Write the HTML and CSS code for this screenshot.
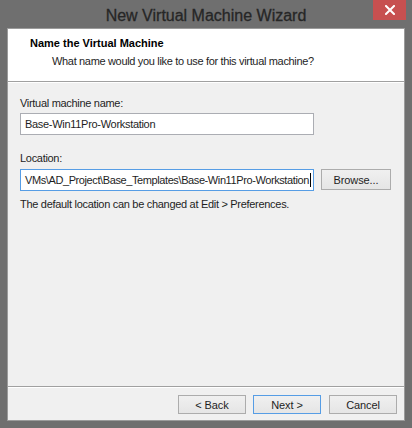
FILE: index.html
```html
<!DOCTYPE html>
<html>
<head>
<meta charset="utf-8">
<link rel="stylesheet" href="styles.css">
</head>
<body>
<div class="window">
  <div class="titlebar">
    <span class="title">New Virtual Machine Wizard</span>
    <div class="close"><svg width="10" height="10" viewBox="0 0 10 10"><path d="M1 1L9 9M9 1L1 9" stroke="#fff" stroke-width="2" stroke-linecap="square"/></svg></div>
  </div>
  <div class="client">
    <div class="header">
      <div class="h-title">Name the Virtual Machine</div>
      <div class="h-sub">What name would you like to use for this virtual machine?</div>
    </div>
    <div class="body">
      <div class="label first">Virtual machine name:</div>
      <div class="input name">Base-Win11Pro-Workstation</div>
      <div class="label second">Location:</div>
      <div class="row">
        <div class="input loc focused"><span>VMs\AD_Project\Base_Templates\Base-Win11Pro-Workstation</span><span class="caret"></span></div>
        <div class="btn browse">Browse...</div>
      </div>
      <div class="note">The default location can be changed at Edit &gt; Preferences.</div>
    </div>
    <div class="footer">
      <div class="btn">&lt; Back</div>
      <div class="btn default">Next &gt;</div>
      <div class="btn cancel">Cancel</div>
    </div>
  </div>
</div>
</body>
</html>
```
FILE: styles.css
```css
* { box-sizing: border-box; }
html, body { margin: 0; padding: 0; }
body {
  width: 412px;
  height: 428px;
  background: #6f6f6f;
  font-family: "Liberation Sans", Arial, sans-serif;
  color: #1e1e1e;
  overflow: hidden;
}
.window {
  width: 412px;
  height: 428px;
  display: flex;
  flex-direction: column;
}
.titlebar {
  position: relative;
  height: 28px;
  flex: none;
  display: flex;
  justify-content: center;
  align-items: center;
}
.title {
  font-size: 16px;
  color: #262626;
  padding-top: 3px;
  -webkit-text-stroke: 0.3px #262626;
}
.close {
  position: absolute;
  top: 0;
  right: 6px;
  width: 33px;
  height: 20px;
  background: #c75050;
  display: flex;
  align-items: center;
  justify-content: center;
}
.close svg { display: block; }
.client {
  flex: 1;
  margin: 0 7px 7px 7px;
  border: 1px solid #9b9b9b;
  background: #f0f0f0;
  display: flex;
  flex-direction: column;
}
.header {
  height: 53px;
  flex: none;
  background: #fff;
  border-bottom: 1px solid #a0a0a0;
  box-shadow: 0 1px 0 #ffffff;
  padding: 7px 0 0 22px;
}
.h-title {
  font-weight: bold;
  font-size: 11px;
  line-height: 14px;
  color: #000;
}
.h-sub {
  font-size: 11px;
  letter-spacing: -0.33px;
  line-height: 16px;
  margin-top: 3px;
  padding-left: 22px;
  color: #1e1e1e;
}
.body {
  flex: 1;
  padding: 0 0 0 12px;
  font-size: 11px;
  letter-spacing: -0.3px;
}
.label {
  line-height: 16px;
  color: #1e1e1e;
}
.label.first { margin-top: 13px; }
.label.second { margin-top: 15px; }
.input {
  background: #fff;
  border: 1px solid #abadb3;
  padding: 0 0 0 4px;
  display: flex;
  align-items: center;
  white-space: nowrap;
  overflow: hidden;
  font-size: 11px;
}
.input.name {
  width: 294px;
  height: 22px;
  margin-top: 2px;
}
.row {
  display: flex;
  gap: 7px;
  margin-top: 3px;
}
.input.loc {
  width: 294px;
  height: 22px;
  letter-spacing: -0.4px;
}
.input.focused { border-color: #569de5; }
.caret {
  display: inline-block;
  flex: none;
  width: 1px;
  height: 14px;
  background: #000;
  margin-left: 1px;
}
.btn {
  width: 68px;
  height: 19px;
  border: 1px solid #acacac;
  background: linear-gradient(#f0f0f0, #e5e5e5);
  display: flex;
  align-items: center;
  justify-content: center;
  font-size: 11px;
  letter-spacing: -0.1px;
  color: #1e1e1e;
}
.btn.browse {
  width: 70px;
  height: 21px;
}
.note {
  margin-top: 5px;
  line-height: 16px;
}
.footer {
  flex: none;
  border-top: 1px solid #a0a0a0;
  box-shadow: inset 0 1px 0 #ffffff;
  padding: 8px 7px 6px 0;
  display: flex;
  justify-content: flex-end;
  gap: 7px;
}
.btn.default { border-color: #569de5; }
.btn.cancel { margin-left: 1px; }
```
